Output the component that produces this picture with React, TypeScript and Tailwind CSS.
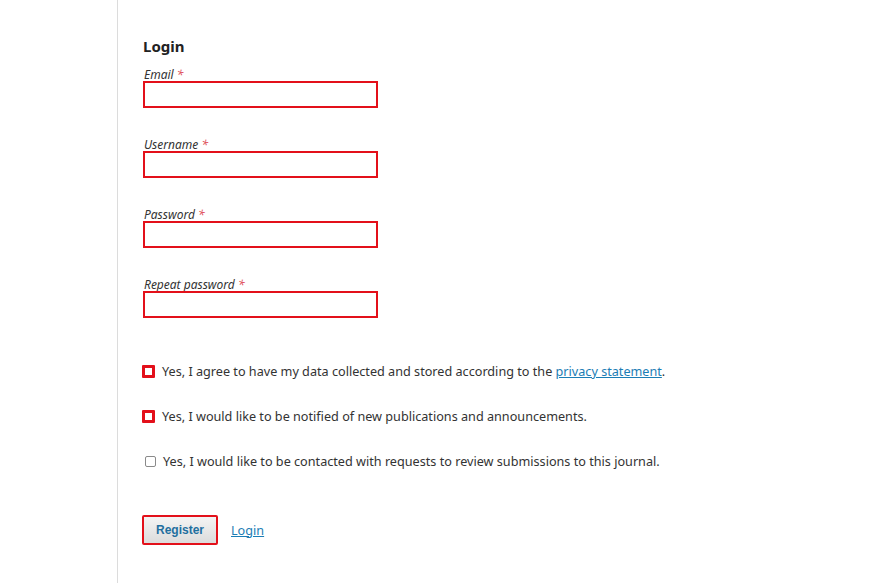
const fields = [
  { label: "Email", type: "email" },
  { label: "Username", type: "text" },
  { label: "Password", type: "password" },
  { label: "Repeat password", type: "password" },
];

const RedBox = () => (
  <span className="w-[13px] h-[13px] border-[3px] border-[#e3101a] bg-white shrink-0 rounded-[1px]" />
);

const PlainBox = () => (
  <span className="w-[11px] h-[11px] border border-[#8a8a8a] bg-white shrink-0 rounded-[2px] ml-[3px]" />
);

export default function App() {
  return (
    <div className="w-[887px] h-[583px] bg-white overflow-hidden font-['Noto_Sans',sans-serif] text-[#222]">
      <div className="ml-[117px] h-full border-l border-[#dcdcdc] pl-[24px] pt-[36px]">
        <h2 className="text-[15px] font-bold leading-[20px] ml-[1px]">Login</h2>

        <div className="mt-[13px] flex flex-col gap-[31px]">
          {fields.map((f) => (
            <div key={f.label} className="flex flex-col">
              <label className="text-[12px] italic leading-[12px] text-[#333] ml-[2px]">
                {f.label} <span className="text-[#e0525c]">*</span>
              </label>
              <input
                type={f.type}
                className="w-[235px] h-[27px] border-2 border-[#e3101a] bg-white outline-none ml-[1px]"
              />
            </div>
          ))}
        </div>

        <div className="mt-[46px] flex flex-col gap-[31px] text-[12.65px] leading-[14px] text-[#333]">
          <div className="flex items-center gap-[7px]">
            <RedBox />
            <span>
              Yes, I agree to have my data collected and stored according to the{" "}
              <a href="#" className="text-[#1b7db5] underline">privacy statement</a>.
            </span>
          </div>
          <div className="flex items-center gap-[7px]">
            <RedBox />
            <span>Yes, I would like to be notified of new publications and announcements.</span>
          </div>
          <div className="flex items-center gap-[7px]">
            <PlainBox />
            <span>Yes, I would like to be contacted with requests to review submissions to this journal.</span>
          </div>
        </div>

        <div className="mt-[47px] flex items-center gap-[13px]">
          <button className="w-[76px] h-[30px] border-2 border-[#e3101a] bg-gradient-to-b from-[#f4f4f4] to-[#dcdcdc] text-[#1f6f9f] font-bold text-[12px] font-['Liberation_Sans',sans-serif] rounded-[2px]">
            Register
          </button>
          <a href="#" className="text-[12.65px] text-[#1b7db5] underline">Login</a>
        </div>
      </div>
    </div>
  );
}
